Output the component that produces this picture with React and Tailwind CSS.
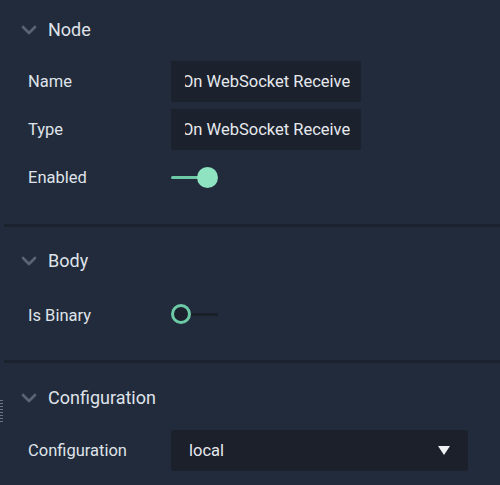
import React from "react";

function Chevron() {
  return (
    <svg width="16" height="10" viewBox="0 0 16 10" className="ml-[21px] mt-[2px]">
      <path d="M2 2 L8 8 L14 2" fill="none" stroke="#5b6473" strokeWidth="2.6" strokeLinecap="round" strokeLinejoin="round" />
    </svg>
  );
}

function Header({ title }) {
  return (
    <div className="flex h-[46px] items-center">
      <Chevron />
      <span className="ml-[11px] text-[18px] text-[#dfe3e9]">{title}</span>
    </div>
  );
}

function Row({ label, children, className = "" }) {
  return (
    <div className={`flex h-[48px] items-center ${className}`}>
      <div className="w-[171px] pl-[28px] pt-[3px] text-[16.5px] text-[#dfe3e9]">{label}</div>
      {children}
    </div>
  );
}

function TextBox({ value }) {
  return (
    <div className="flex h-[41px] w-[190px] items-center bg-[#1c222d]">
      <div className="ml-[14px] mr-[6px] overflow-hidden whitespace-nowrap pt-[2px]">
        <div className="-ml-[3px] text-[16.5px] text-[#e6e9ee]">{value}</div>
      </div>
    </div>
  );
}

export default function App() {
  return (
    <div
      className="relative h-[485px] w-[500px] overflow-hidden bg-[#222b3b]"
      style={{ fontFamily: "Roboto, 'Liberation Sans', sans-serif" }}
    >
      {/* Node */}
      <div className="pt-[6px]">
        <Header title="Node" />
        <Row label="Name" className="mt-[5px]">
          <TextBox value="On WebSocket Receive" />
        </Row>
        <Row label="Type">
          <TextBox value="On WebSocket Receive" />
        </Row>
        <Row label="Enabled">
          <div className="flex items-center">
            <div className="h-[3px] w-[28px] rounded-full bg-[#6ec9a6]" />
            <div className="-ml-[2px] h-[21px] w-[21px] rounded-full bg-[#8fe3c0]" />
          </div>
        </Row>
        <div className="h-[23px]" />
      </div>
      <div className="ml-[4px] h-[3px] bg-[#1b212d]" />

      {/* Body */}
      <div className="pt-[10px]">
        <Header title="Body" />
        <Row label="Is Binary" className="mt-[8px]">
          <div className="-mt-[2px] flex items-center">
            <div className="h-[20px] w-[20px] rounded-full border-[3px] border-[#6ccba6] bg-[#1c222d]" />
            <div className="h-[3px] w-[27px] bg-[#1a1f2a]" />
          </div>
        </Row>
        <div className="h-[21px]" />
      </div>
      <div className="ml-[4px] h-[3px] bg-[#1b212d]" />

      {/* Configuration */}
      <div className="pt-[11px]">
        <Header title="Configuration" />
        <Row label="Configuration" className="mt-[6px]">
          <div className="flex h-[41px] w-[297px] items-center justify-between rounded-[3px] bg-[#1b202b] pl-[18px] pr-[18px]">
            <span className="pt-[2px] text-[16.5px] text-[#e6e9ee]">local</span>
            <svg width="12" height="9" viewBox="0 0 12 9">
              <path d="M0 0 L12 0 L6 9 Z" fill="#eef0f4" />
            </svg>
          </div>
        </Row>
      </div>

      {/* resize handle */}
      <div className="absolute left-0 top-[400px] flex w-[3px] flex-col gap-[2px]">
        {[0, 1, 2, 3, 4, 5, 6, 7].map((i) => (
          <div key={i} className="h-[1px] w-[3px] bg-[#6b7280]" />
        ))}
      </div>
    </div>
  );
}
